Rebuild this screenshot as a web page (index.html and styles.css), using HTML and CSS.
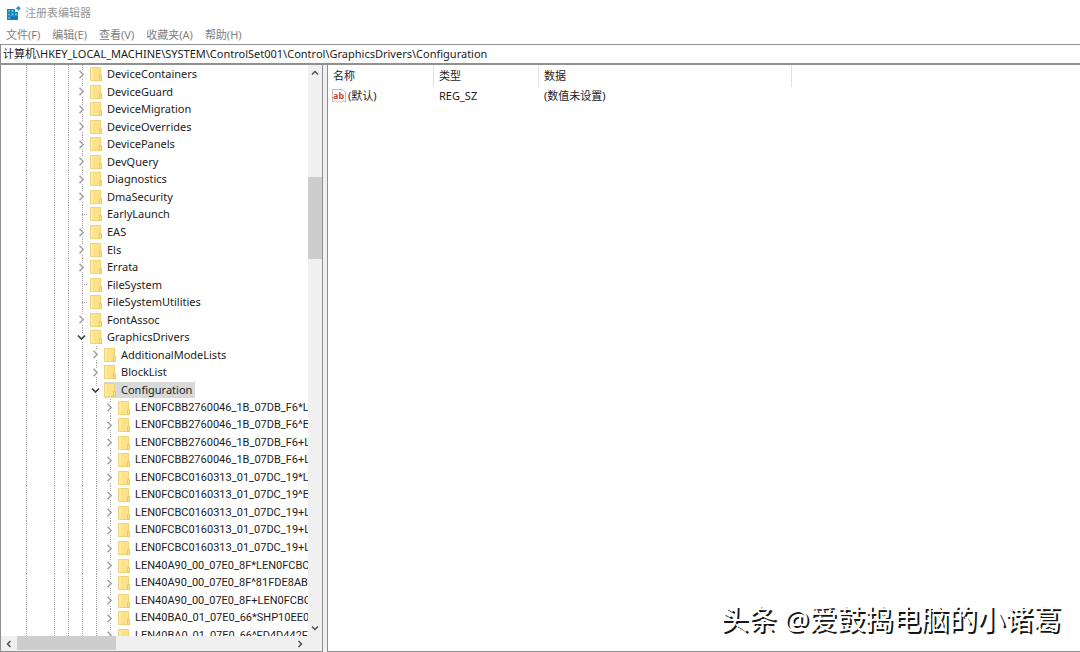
FILE: index.html
```html
<!DOCTYPE html>
<html lang="zh-CN">
<head>
<meta charset="utf-8">
<title>注册表编辑器</title>
<link rel="stylesheet" href="styles.css">
</head>
<body>
<svg class="defs" aria-hidden="true">
  <symbol id="folder" viewBox="0 0 12 14"><path d="M.5.5h10v8l1 1v4H.5z" fill="#fde289" stroke="#eed379"/><path d="M9.500 8.500h2v5h-2z" fill="#fde289" stroke="#e9c968"/><path d="M1 1h2v12H1z" fill="#ffeaa3"/></symbol>
  <symbol id="right" viewBox="0 0 8 9"><path d="M2 .8 5.700 4.500 2 8.200" fill="none" stroke="#a0a0a0" stroke-width="1.500"/></symbol>
  <symbol id="down" viewBox="0 0 10 9"><path d="M1.500 2.500 5 6l3.500-3.500" fill="none" stroke="#404040" stroke-width="1.700"/></symbol>
</svg>

<header class="titlebar">
  <svg class="app-icon" viewBox="0 0 15 15" aria-hidden="true">
    <path d="M1 3h11v11H1z" fill="#1385bd"/>
    <path d="M2 4h2v2H2zM2 7.500h2v2H2zM2 11h2v2H2z" fill="#3db4e4"/>
    <path d="M5.500 4h2v2h-2zM5.500 7.500h2v2h-2zM9 7.500h2v2H9z" fill="#62c8ee"/>
    <path d="M5.500 11h2v2h-2zM9 11h2v2H9z" fill="#0c6da8"/>
    <path d="M9 2h4v4H9z" fill="#fff"/>
    <path d="M12.200 0 14.800 2.200 12.600 4.800 10 2.600z" fill="#2795c9"/>
  </svg>
  <h1>注册表编辑器</h1>
</header>
<nav class="menu">
  <button>文件(F)</button><button>编辑(E)</button><button>查看(V)</button><button>收藏夹(A)</button><button>帮助(H)</button>
</nav>
<input class="address" type="text" aria-label="地址" value="计算机\HKEY_LOCAL_MACHINE\SYSTEM\ControlSet001\Control\GraphicsDrivers\Configuration">

<main class="panes">
  <section class="tree-pane">
    <ul class="tree">
      <li class="row lv4"><button class="exp" aria-label="展开"><svg><use href="#right"/></svg></button><svg class="folder"><use href="#folder"/></svg><span>DeviceContainers</span></li>
      <li class="row lv4"><button class="exp" aria-label="展开"><svg><use href="#right"/></svg></button><svg class="folder"><use href="#folder"/></svg><span>DeviceGuard</span></li>
      <li class="row lv4"><button class="exp" aria-label="展开"><svg><use href="#right"/></svg></button><svg class="folder"><use href="#folder"/></svg><span>DeviceMigration</span></li>
      <li class="row lv4"><button class="exp" aria-label="展开"><svg><use href="#right"/></svg></button><svg class="folder"><use href="#folder"/></svg><span>DeviceOverrides</span></li>
      <li class="row lv4"><button class="exp" aria-label="展开"><svg><use href="#right"/></svg></button><svg class="folder"><use href="#folder"/></svg><span>DevicePanels</span></li>
      <li class="row lv4"><button class="exp" aria-label="展开"><svg><use href="#right"/></svg></button><svg class="folder"><use href="#folder"/></svg><span>DevQuery</span></li>
      <li class="row lv4"><button class="exp" aria-label="展开"><svg><use href="#right"/></svg></button><svg class="folder"><use href="#folder"/></svg><span>Diagnostics</span></li>
      <li class="row lv4"><button class="exp" aria-label="展开"><svg><use href="#right"/></svg></button><svg class="folder"><use href="#folder"/></svg><span>DmaSecurity</span></li>
      <li class="row lv4"><i class="leaf"></i><svg class="folder"><use href="#folder"/></svg><span>EarlyLaunch</span></li>
      <li class="row lv4"><button class="exp" aria-label="展开"><svg><use href="#right"/></svg></button><svg class="folder"><use href="#folder"/></svg><span>EAS</span></li>
      <li class="row lv4"><button class="exp" aria-label="展开"><svg><use href="#right"/></svg></button><svg class="folder"><use href="#folder"/></svg><span>Els</span></li>
      <li class="row lv4"><button class="exp" aria-label="展开"><svg><use href="#right"/></svg></button><svg class="folder"><use href="#folder"/></svg><span>Errata</span></li>
      <li class="row lv4"><i class="leaf"></i><svg class="folder"><use href="#folder"/></svg><span>FileSystem</span></li>
      <li class="row lv4"><i class="leaf"></i><svg class="folder"><use href="#folder"/></svg><span>FileSystemUtilities</span></li>
      <li class="row lv4"><button class="exp" aria-label="展开"><svg><use href="#right"/></svg></button><svg class="folder"><use href="#folder"/></svg><span>FontAssoc</span></li>
      <li class="row lv4"><button class="exp open" aria-label="折叠"><svg><use href="#down"/></svg></button><svg class="folder"><use href="#folder"/></svg><span>GraphicsDrivers</span></li>
      <li class="row lv5"><button class="exp" aria-label="展开"><svg><use href="#right"/></svg></button><svg class="folder"><use href="#folder"/></svg><span>AdditionalModeLists</span></li>
      <li class="row lv5"><button class="exp" aria-label="展开"><svg><use href="#right"/></svg></button><svg class="folder"><use href="#folder"/></svg><span>BlockList</span></li>
      <li class="row lv5 selected"><button class="exp open" aria-label="折叠"><svg><use href="#down"/></svg></button><svg class="folder"><use href="#folder"/></svg><span>Configuration</span></li>
      <li class="row lv6"><button class="exp" aria-label="展开"><svg><use href="#right"/></svg></button><svg class="folder"><use href="#folder"/></svg><span>LEN0FCBB2760046_1B_07DB_F6*L</span></li>
      <li class="row lv6"><button class="exp" aria-label="展开"><svg><use href="#right"/></svg></button><svg class="folder"><use href="#folder"/></svg><span>LEN0FCBB2760046_1B_07DB_F6^E</span></li>
      <li class="row lv6"><button class="exp" aria-label="展开"><svg><use href="#right"/></svg></button><svg class="folder"><use href="#folder"/></svg><span>LEN0FCBB2760046_1B_07DB_F6+L</span></li>
      <li class="row lv6"><button class="exp" aria-label="展开"><svg><use href="#right"/></svg></button><svg class="folder"><use href="#folder"/></svg><span>LEN0FCBB2760046_1B_07DB_F6+L</span></li>
      <li class="row lv6"><button class="exp" aria-label="展开"><svg><use href="#right"/></svg></button><svg class="folder"><use href="#folder"/></svg><span>LEN0FCBC0160313_01_07DC_19*L</span></li>
      <li class="row lv6"><button class="exp" aria-label="展开"><svg><use href="#right"/></svg></button><svg class="folder"><use href="#folder"/></svg><span>LEN0FCBC0160313_01_07DC_19^E</span></li>
      <li class="row lv6"><button class="exp" aria-label="展开"><svg><use href="#right"/></svg></button><svg class="folder"><use href="#folder"/></svg><span>LEN0FCBC0160313_01_07DC_19+L</span></li>
      <li class="row lv6"><button class="exp" aria-label="展开"><svg><use href="#right"/></svg></button><svg class="folder"><use href="#folder"/></svg><span>LEN0FCBC0160313_01_07DC_19+L</span></li>
      <li class="row lv6"><button class="exp" aria-label="展开"><svg><use href="#right"/></svg></button><svg class="folder"><use href="#folder"/></svg><span>LEN0FCBC0160313_01_07DC_19+L</span></li>
      <li class="row lv6"><button class="exp" aria-label="展开"><svg><use href="#right"/></svg></button><svg class="folder"><use href="#folder"/></svg><span>LEN40A90_00_07E0_8F*LEN0FCBC</span></li>
      <li class="row lv6"><button class="exp" aria-label="展开"><svg><use href="#right"/></svg></button><svg class="folder"><use href="#folder"/></svg><span>LEN40A90_00_07E0_8F^81FDE8AB</span></li>
      <li class="row lv6"><button class="exp" aria-label="展开"><svg><use href="#right"/></svg></button><svg class="folder"><use href="#folder"/></svg><span>LEN40A90_00_07E0_8F+LEN0FCBC</span></li>
      <li class="row lv6"><button class="exp" aria-label="展开"><svg><use href="#right"/></svg></button><svg class="folder"><use href="#folder"/></svg><span>LEN40BA0_01_07E0_66*SHP10EE0_</span></li>
      <li class="row lv6"><button class="exp" aria-label="展开"><svg><use href="#right"/></svg></button><svg class="folder"><use href="#folder"/></svg><span>LEN40BA0_01_07E0_66^FD4D442F</span></li>
    </ul>
    <div class="vbar">
      <button aria-label="向上滚动"><svg viewBox="0 0 10 10"><path d="M2 6.500 5 3.500l3 3" /></svg></button>
      <div class="vtrack"><div class="vthumb"></div></div>
      <button aria-label="向下滚动"><svg viewBox="0 0 10 10"><path d="M2 3.500 5 6.500l3-3"/></svg></button>
    </div>
    <div class="hbar">
      <button aria-label="向左滚动"><svg viewBox="0 0 10 10"><path d="M6.500 2l-3 3 3 3"/></svg></button>
      <div class="htrack"><div class="hthumb"></div></div>
      <button aria-label="向右滚动"><svg viewBox="0 0 10 10"><path d="M3.500 2l3 3-3 3"/></svg></button>
    </div>
    <div class="corner"></div>
  </section>

  <section class="value-pane">
    <table class="values">
      <thead><tr><th class="c-name">名称</th><th class="c-type">类型</th><th class="c-data">数据</th><th class="c-rest"></th></tr></thead>
      <tbody><tr>
        <td><div class="value-name"><svg viewBox="0 0 14 14" aria-hidden="true"><path d="M.5.5h9.500l3.500 3v9.500l-2-1-2 1.500-2-1.500-2 1.500-2-1.500-3 1z" fill="#fff" stroke="#b9bec6"/><text x="1" y="10" class="ab">ab</text></svg><span>(默认)</span></div></td>
        <td>REG_SZ</td><td>(数值未设置)</td><td></td>
      </tr></tbody>
    </table>
  </section>
</main>
<div class="watermark">头条 @爱鼓捣电脑的小诸葛</div>
</body>
</html>
```

FILE: styles.css
```css
* { box-sizing: border-box; }

body {
  margin: 0;
  height: 100vh;
  display: flex;
  flex-direction: column;
  overflow: hidden;
  background: #fff;
  color: #1c1c1c;
  font: 11px/16px "Noto Sans", "Noto Sans CJK SC", sans-serif;
}

button {
  margin: 0;
  padding: 0;
  border: 0;
  background: none;
  font: inherit;
  color: inherit;
}

.defs { display: none; }

.titlebar {
  display: flex;
  align-items: center;
  gap: 4px;
  height: 26px;
  padding-left: 6px;
  color: #969696;
}

.titlebar h1 { margin: 0; font-size: 11px; font-weight: 400; }

.app-icon { width: 15px; height: 15px; }

.menu {
  display: flex;
  gap: 12px;
  height: 18px;
  padding-left: 6px;
  color: #808080;
}

.address {
  flex: none;
  width: 100%;
  height: 21px;
  padding: 0 2px 2px;
  border: 1px solid #909090;
  border-bottom-width: 2px;
  border-right: 0;
  outline: 0;
  background: #fff;
  color: inherit;
  font: inherit;
}

.panes {
  flex: 1;
  min-height: 0;
  display: flex;
  gap: 4px;
  background: #f0f0f0;
}

.tree-pane {
  flex: none;
  width: 323px;
  display: grid;
  grid-template: minmax(0, 1fr) 15px / minmax(0, 1fr) 14px;
  border: solid #8e8e8e;
  border-width: 0 1px 1px 1px;
  background: #fff;
}

.tree {
  display: grid;
  align-content: start;
  grid-auto-rows: 18px 17px 18px 17px 18px 17px 18px 17px 18px;
  margin: 0;
  padding: 0;
  overflow: hidden;
  list-style: none;
}

.row {
  --dots: repeating-linear-gradient(#a4a4a4 0 1px, transparent 1px 2px);
  display: flex;
  align-items: center;
  min-width: 0;
  white-space: nowrap;
  background-repeat: no-repeat;
  background-size: 1px 100%;
}

.lv4 {
  padding-left: 74px;
  background-image: var(--dots), var(--dots), var(--dots), var(--dots);
  background-position: 25px 0, 53px 0, 67px 0, 81px 0;
}

.lv5 {
  padding-left: 88px;
  background-image: var(--dots), var(--dots), var(--dots), var(--dots), var(--dots);
  background-position: 25px 0, 53px 0, 67px 0, 81px 0, 95px 0;
}

.lv6 {
  padding-left: 102px;
  font-family: Roboto, "Noto Sans", sans-serif;
  background-image: var(--dots), var(--dots), var(--dots), var(--dots), var(--dots), var(--dots);
  background-position: 25px 0, 53px 0, 67px 0, 81px 0, 95px 0, 109px 0;
}

.exp, .leaf {
  flex: none;
  display: flex;
  justify-content: center;
  width: 13px;
}

.exp svg { width: 9px; height: 9px; background: #fff; }
.exp.open svg { width: 11px; }

.leaf {
  height: 1px;
  background: repeating-linear-gradient(90deg, #a4a4a4 0 1px, transparent 1px 2px) 7px 0 / 6px 1px no-repeat;
}

.folder { flex: none; width: 14px; height: 14px; padding-right: 2px; margin-left: 2px; }

.row span { padding: 0 3px; line-height: 16px; }
.row.lv6 span { padding-right: 0; }

.selected .folder, .selected span { background-color: #d9d9d9; }
.selected .folder { height: 16px; }

.vbar { display: flex; flex-direction: column; background: #f0f0f0; }
.vbar button { height: 16px; }
.hbar { display: flex; background: #f0f0f0; }
.hbar button { width: 16px; }

.vbar button, .hbar button {
  display: grid;
  place-items: center;
  flex: none;
}

.vbar svg, .hbar svg {
  width: 10px;
  height: 10px;
  fill: none;
  stroke: #505050;
  stroke-width: 1.5;
}

.vtrack { flex: 1; padding-top: 96px; }
.vthumb { height: 82px; background: #cdcdcd; }
.htrack { flex: 1; }
.hthumb { width: 99px; height: 14px; background: #cdcdcd; }
.corner { background: #f0f0f0; }

.value-pane {
  flex: 1;
  min-width: 0;
  border: solid #8e8e8e;
  border-width: 0 0 1px 1px;
  background: #fff;
}

.values {
  width: 100%;
  table-layout: fixed;
  border-collapse: separate;
  border-spacing: 0;
}

.values th {
  height: 22px;
  padding: 0 5px;
  border-right: 1px solid #e2e2e2;
  font-weight: 400;
  text-align: left;
}

.values td { height: 18px; padding: 0 5px; }
.values td:first-child { padding-left: 4px; }
.values .c-rest { border-right: 0; }
.c-name { width: 106px; }
.c-type { width: 105px; }
.c-data { width: 253px; }

.value-name { display: flex; align-items: center; gap: 2px; }
.value-name svg { width: 14px; height: 14px; }
.ab { font: 700 9px "Noto Sans", sans-serif; fill: #d0432c; }

.watermark {
  position: absolute;
  right: 19px;
  bottom: 13px;
  color: #fff;
  font-size: 28px;
  line-height: 40px;
  text-shadow: 2px 2px 0 #151515;
  white-space: nowrap;
}
```
